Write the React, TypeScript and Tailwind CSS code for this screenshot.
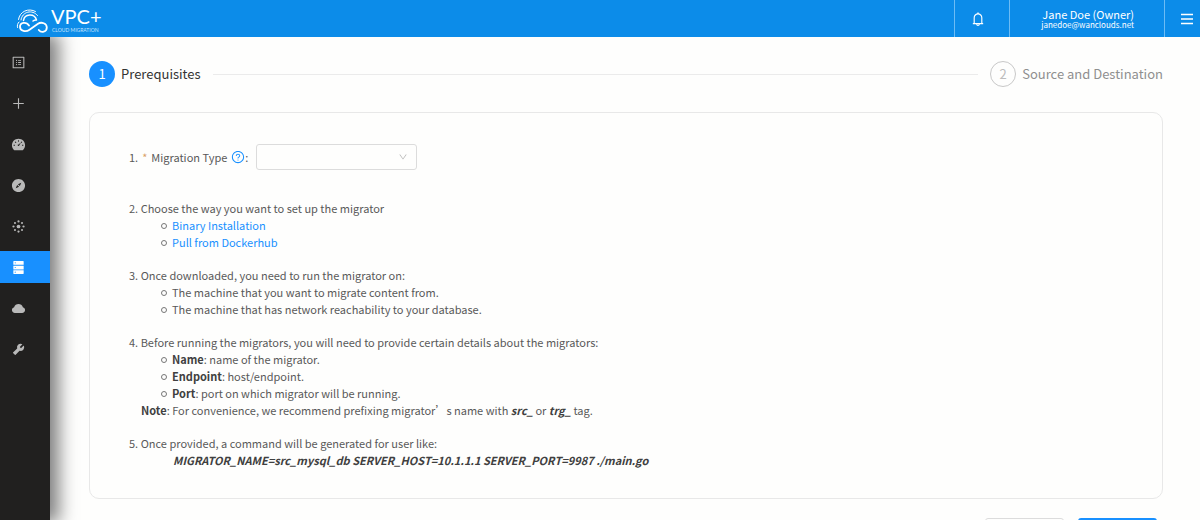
import { ReactNode } from "react";
import {
  AiFillCloud,
  AiFillCompass,
  AiFillDashboard,
  AiFillDatabase,
  AiFillTool,
  AiOutlineBell,
  AiOutlineDown,
  AiOutlinePlus,
  AiOutlineProfile,
  AiOutlineQuestionCircle,
} from "react-icons/ai";
import { clsx } from "clsx";

function Logo() {
  return (
    <a href="#" aria-label="VPC+ Cloud Migration" className="flex items-center gap-[3px] pl-4 text-white">
      <svg viewBox="0 0 32 24" className="mt-1 h-6 w-8" fill="none" stroke="currentColor" strokeLinecap="round">
        <path
          strokeWidth="1.800"
          d="M13 16.500C10.500 12.500 4 13 4 17.800c0 4.500 6 5.500 9.500 3l8.500-6c3.500-2.300 8.800-.300 8.800 3.700 0 4.500-5.500 5.800-8 2.500"
        />
        <path strokeWidth="1.500" d="M7.500 11.500C8.500 4.500 18.500 4 20.500 11M20.500 11c-1.500-.200-2.500.200-3.500 1" />
        <path strokeWidth="1" d="M5 11C6 2.500 16.500 0 21.500 6.500" />
        <path strokeWidth="1" d="M2.500 10.500C3.500 2.500 12.500-1.500 19.500 2.500" />
        <path strokeWidth="1" d="M3 13C1.500 14.500 1 16.500 1.500 18.500" />
      </svg>
      <span className="flex flex-col font-['Lato',sans-serif]">
        <span className="text-[20px] leading-[22px]">VPC+</span>
        <span className="pl-px text-[5px] leading-[6px] text-[#c5e3fc]">CLOUD MIGRATION</span>
      </span>
    </a>
  );
}

function MenuIcon() {
  return (
    <svg viewBox="0 0 12 12" className="h-3 w-3" stroke="currentColor" strokeWidth="1.500">
      <path d="M0 1.500h12M0 6h12M0 10.500h12" />
    </svg>
  );
}

function Header() {
  return (
    <header className="relative z-20 flex h-[37px] shrink-0 bg-[#0c8ce9]">
      <div className="flex flex-1 items-center">
        <Logo />
      </div>
      <button aria-label="Notifications" className="flex w-[55px] items-center justify-center border-l border-[#6dbcf5] pr-2 text-white">
        <AiOutlineBell className="h-4 w-4" />
      </button>
      <div className="flex w-[155px] flex-col items-end justify-center border-l border-[#6dbcf5] pr-[30px] text-white">
        <span className="text-[11px] leading-3">Jane Doe (Owner)</span>
        <span className="text-[8px] leading-[10px]">janedoe@wanclouds.net</span>
      </div>
      <button aria-label="Menu" className="flex w-9 items-center justify-end border-l border-[#6dbcf5] pr-[7px] text-white">
        <MenuIcon />
      </button>
    </header>
  );
}

// small hub with eight dots around it
function ClusterIcon() {
  return (
    <svg viewBox="0 0 14 14" className="h-[13px] w-[13px]" fill="currentColor">
      <circle cx="7" cy="7" r="2" />
      <circle cx="7" cy="1.600" r="1.200" />
      <circle cx="7" cy="12.400" r="1.200" />
      <circle cx="1.600" cy="7" r="1.200" />
      <circle cx="12.400" cy="7" r="1.200" />
      <circle cx="3.200" cy="3.200" r="1.100" />
      <circle cx="10.800" cy="3.200" r="1.100" />
      <circle cx="3.200" cy="10.800" r="1.100" />
      <circle cx="10.800" cy="10.800" r="1.100" />
    </svg>
  );
}

const NAV_ITEMS = [
  { label: "Overview", icon: <AiOutlineProfile /> },
  { label: "Create", icon: <AiOutlinePlus /> },
  { label: "Dashboard", icon: <AiFillDashboard /> },
  { label: "Discover", icon: <AiFillCompass /> },
  { label: "Clusters", icon: <ClusterIcon /> },
  { label: "Migration", icon: <AiFillDatabase />, active: true },
  { label: "Clouds", icon: <AiFillCloud /> },
  { label: "Settings", icon: <AiFillTool /> },
];

function Sidebar() {
  return (
    <aside className="z-10 w-[50px] shrink-0 bg-[#21201f] pt-[9px] shadow-[6px_0_18px_3px_rgba(0,0,0,0.5)]">
      <nav className="flex flex-col gap-[9px]">
        {NAV_ITEMS.map((item) => (
          <a
            key={item.label}
            href="#"
            aria-label={item.label}
            className={clsx(
              "flex h-8 items-center justify-center pr-[13px] text-[15px]",
              item.active ? "bg-[#1890ff] text-white" : "text-[#b9b9b9]"
            )}
          >
            {item.icon}
          </a>
        ))}
      </nav>
    </aside>
  );
}

function Steps() {
  return (
    <ol className="flex items-center text-[13px] leading-6">
      <li className="flex items-center gap-[6px] text-[#333]">
        <span className="flex h-[26px] w-[26px] items-center justify-center rounded-full bg-[#1890ff] text-white">1</span>
        Prerequisites
      </li>
      <li aria-hidden="true" className="mx-3 h-px flex-1 bg-[#ebebeb]" />
      <li className="flex items-center gap-[6px] text-[#8f8f8f]">
        <span className="flex h-[26px] w-[26px] items-center justify-center rounded-full border border-[#c8c8c8] text-[#bdbdbd]">
          2
        </span>
        Source and Destination
      </li>
    </ol>
  );
}

type InstructionProps = {
  number: number;
  title: string;
  children: ReactNode;
};

function Instruction({ number, title, children }: InstructionProps) {
  return (
    <section>
      <p>
        {number}. {title}
      </p>
      {children}
    </section>
  );
}

function Bullets({ items }: { items: ReactNode[] }) {
  return (
    <ul className="pl-8">
      {items.map((item, index) => (
        <li key={index} className="flex items-center gap-[5px]">
          <span className="h-[6px] w-[6px] rounded-full border border-[#777]" />
          <span>{item}</span>
        </li>
      ))}
    </ul>
  );
}

export default function App() {
  return (
    <div
      lang="zh-CN"
      className="flex h-screen flex-col overflow-hidden bg-[#fefefd] font-['Noto_Sans_CJK_SC',sans-serif] text-[#595959]"
    >
      <Header />
      <div className="flex min-h-0 flex-1">
        <Sidebar />
        <main className="min-w-0 flex-1 overflow-hidden pt-6 pr-[37px] pl-[39px]">
          <Steps />

          <div className="mt-[25px] rounded-[10px] border border-[#e8e8e8] px-[39px] pt-[31px] pb-[29px] text-[11px] leading-[17px]">
            <div className="flex items-center gap-2">
              <label htmlFor="migration-type" className="flex items-center gap-1">
                <span>1.</span>
                <span className="text-[#d9a066]">*</span>
                <span>Migration Type</span>
                <span className="flex items-center">
                  <AiOutlineQuestionCircle className="h-[14px] w-[14px] text-[#1890ff]" />:
                </span>
              </label>
              <div className="relative">
                <select
                  id="migration-type"
                  className="block h-[26px] w-[161px] appearance-none rounded-[3px] border border-[#dcdcdc] bg-transparent px-2"
                />
                <AiOutlineDown className="pointer-events-none absolute top-2 right-[9px] h-[10px] w-[10px] text-[#b5b5b5]" />
              </div>
            </div>

            <div className="mt-[30px] flex flex-col gap-4">
              <Instruction number={2} title="Choose the way you want to set up the migrator">
                <Bullets
                  items={[
                    <a href="#" className="text-[#1890ff]">Binary Installation</a>,
                    <a href="#" className="text-[#1890ff]">Pull from Dockerhub</a>,
                  ]}
                />
              </Instruction>

              <Instruction number={3} title="Once downloaded, you need to run the migrator on:">
                <Bullets
                  items={[
                    "The machine that you want to migrate content from.",
                    "The machine that has network reachability to your database.",
                  ]}
                />
              </Instruction>

              <Instruction
                number={4}
                title="Before running the migrators, you will need to provide certain details about the migrators:"
              >
                <Bullets
                  items={[
                    <><b className="text-[#404040]">Name</b>: name of the migrator.</>,
                    <><b className="text-[#404040]">Endpoint</b>: host/endpoint.</>,
                    <><b className="text-[#404040]">Port</b>: port on which migrator will be running.</>,
                  ]}
                />
                <p className="pl-3">
                  <b className="text-[#404040]">Note</b>: For convenience, we recommend prefixing migrator’s name with{" "}
                  <b className="text-[#404040] italic">src_</b> or <b className="text-[#404040] italic">trg_</b> tag.
                </p>
              </Instruction>

              <Instruction number={5} title="Once provided, a command will be generated for user like:">
                <p className="pl-11 font-bold text-[#404040] italic">
                  MIGRATOR_NAME=src_mysql_db SERVER_HOST=10.1.1.1 SERVER_PORT=9987 ./main.go
                </p>
              </Instruction>
            </div>
          </div>

          <div className="mt-[19px] flex justify-end gap-[14px] pr-[6px] text-xs">
            <button aria-label="Cancel" className="h-8 w-[79px] rounded-[3px] border border-[#dcdcdc]" />
            <button aria-label="Next" className="h-8 w-[79px] rounded-[3px] bg-[#1890ff]" />
          </div>
        </main>
      </div>
    </div>
  );
}
